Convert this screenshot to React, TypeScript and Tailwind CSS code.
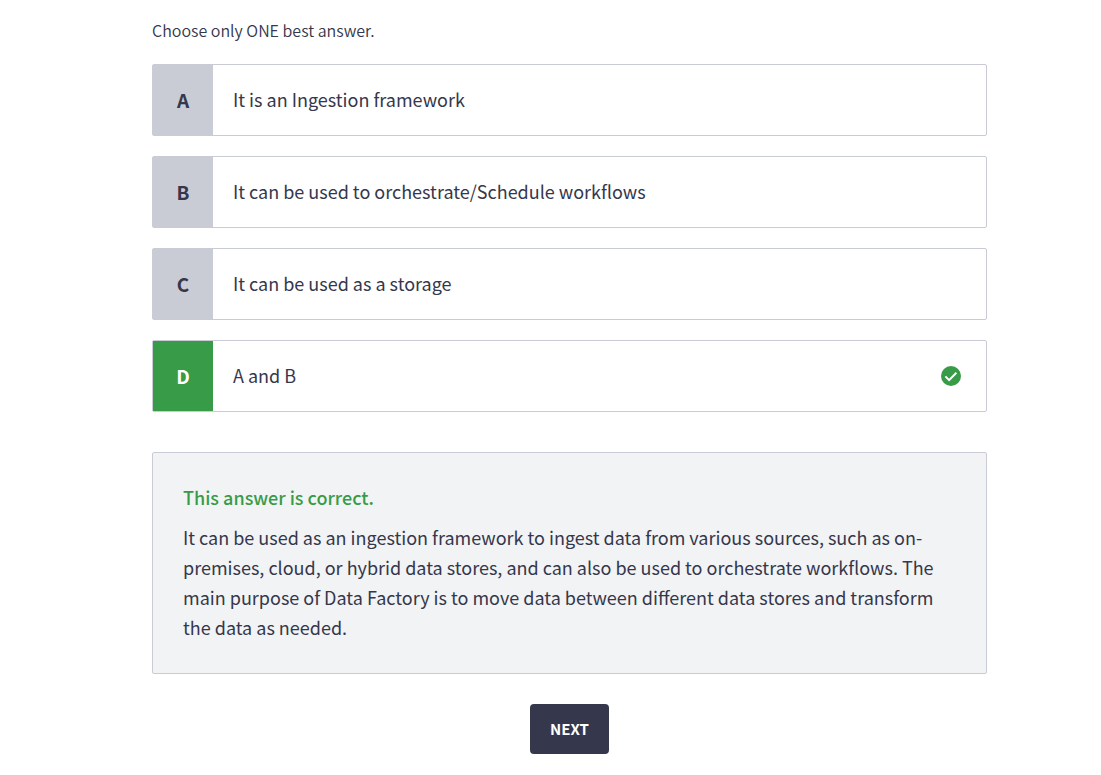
const answers = [
  { key: 'A', text: 'It is an Ingestion framework', correct: false },
  { key: 'B', text: 'It can be used to orchestrate/Schedule workflows', correct: false },
  { key: 'C', text: 'It can be used as a storage', correct: false },
  { key: 'D', text: 'A and B', correct: true },
];

function CorrectIcon() {
  return (
    <svg viewBox="0 0 20 20" className="mr-[25px] size-5 shrink-0" role="img" aria-label="Correct">
      <circle cx="10" cy="10" r="10" fill="#379b48" />
      <path d="M4.4 10.4l3.7 3.7L15.4 6.8" fill="none" stroke="#fff" strokeWidth="2" />
    </svg>
  );
}

export default function App() {
  return (
    <main className="min-h-screen bg-white pr-[114px] pl-[152px] font-['Noto_Sans_CJK_SC',sans-serif] text-[#35374c]">
      <p className="pt-[18px] text-[16px] leading-[25px] font-[350]">Choose only ONE best answer.</p>
      <div className="mt-[21px] flex flex-col gap-5">
        {answers.map((a) => (
          <button
            key={a.key}
            type="button"
            className="flex h-[72px] w-full items-center rounded-[2px] border border-[#c9cbd5] bg-white text-left"
          >
            <span
              className={
                a.correct
                  ? 'flex w-[60px] shrink-0 items-center justify-center self-stretch bg-[#379b48] text-[19px] font-bold text-white'
                  : 'flex w-[60px] shrink-0 items-center justify-center self-stretch bg-[#c9cbd5] text-[19px] font-bold'
              }
            >
              {a.key}
            </span>
            <span className="flex-1 px-5 pb-0.5 text-[18px] leading-[30px]">{a.text}</span>
            {a.correct && <CorrectIcon />}
          </button>
        ))}
      </div>
      <section className="mt-10 rounded-[2px] border border-[#c9cbd5] bg-[#f2f3f5] px-[30px] pt-[29px] pb-[31px]">
        <h2 className="text-[18px] leading-[30px] font-medium text-[#379b48]">This answer is correct.</h2>
        <p className="mt-[10px] text-[18px] leading-[30px]">
          It can be used as an ingestion framework to ingest data from various sources, such as on-premises, cloud, or
          hybrid data stores, and can also be used to orchestrate workflows. The main purpose of Data Factory is to move
          data between different data stores and transform the data as needed.
        </p>
      </section>
      <div className="mt-[30px] flex justify-center">
        <button type="button" className="h-[50px] rounded-[4px] bg-[#35374c] px-5 text-[15px] font-bold text-white">
          NEXT
        </button>
      </div>
    </main>
  );
}
